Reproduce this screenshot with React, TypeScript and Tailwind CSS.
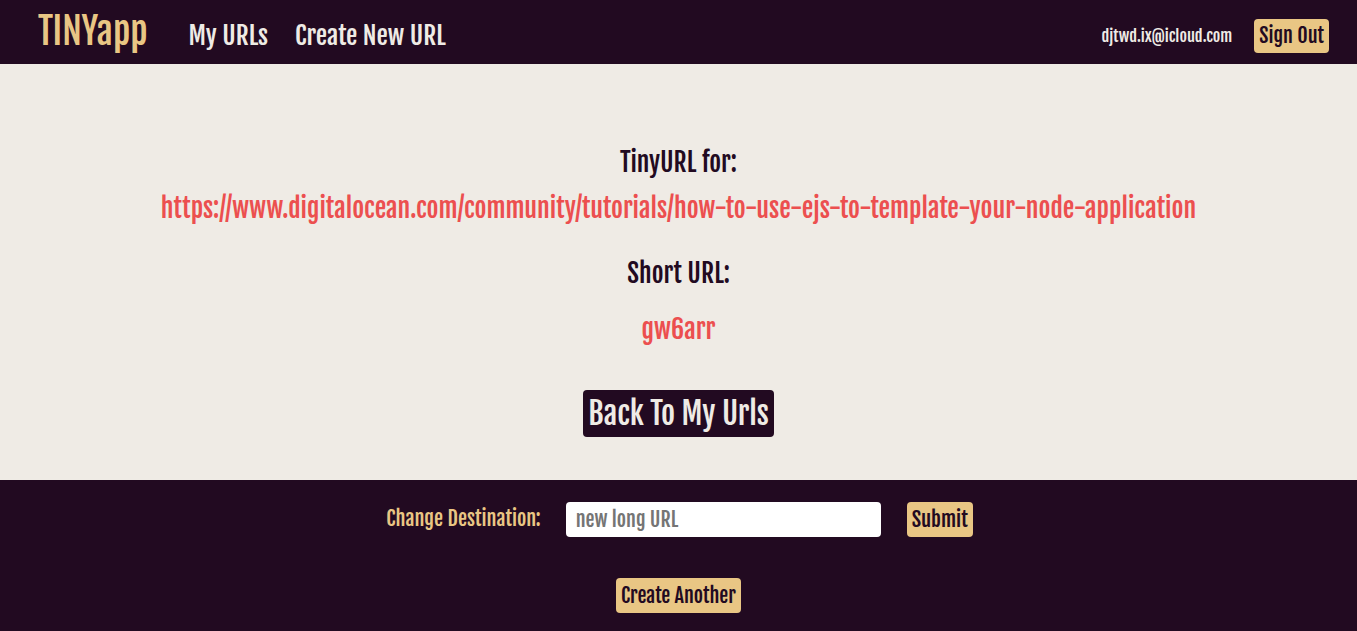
import React from "react";

const F = { fontFamily: '"Fjalla One","DejaVu Sans Condensed","Liberation Sans Narrow",sans-serif' };

export default function App() {
  return (
    <div style={F} className="w-[1357px] h-[631px] flex flex-col bg-[#efebe5] font-normal">
      <header className="h-[64px] bg-[#220a21] flex items-center pl-[38px] pr-[28px]">
        <div className="flex items-baseline">
          <div className="text-[36px] leading-[44px] text-[#e9c684]">TINYapp</div>
          <nav className="flex items-baseline gap-[27px] ml-[41px] text-[25.3px] text-[#efebe5]">
            <span>My URLs</span>
            <span>Create New URL</span>
          </nav>
        </div>
        <div className="ml-auto mt-[8px] flex items-center gap-[22px]">
          <span className="text-[16.2px] text-[#efebe5]">djtwd.ix@icloud.com</span>
          <button className="h-[34px] px-[5px] rounded-[4px] bg-[#e9c684] text-[#220a21] text-[20px]">Sign Out</button>
        </div>
      </header>
      <main className="h-[416px] flex flex-col items-center pt-[82px]">
        <div className="text-[25.6px] text-[#220a21] leading-[32px]">TinyURL for:</div>
        <div className="mt-[14px] text-[25.8px] text-[#ec4f4f] leading-[32px]">https://www.digitalocean.com/community/tutorials/how-to-use-ejs-to-template-your-node-application</div>
        <div className="mt-[33px] text-[25.6px] text-[#220a21] leading-[32px]">Short URL:</div>
        <div className="mt-[24px] text-[26px] text-[#ec4f4f] leading-[32px]">gw6arr</div>
        <button className="mt-[45px] h-[47px] px-[5px] rounded-[4px] bg-[#220a21] text-[#efebe5] text-[30.4px]">Back To My Urls</button>
      </main>
      <footer className="flex-1 bg-[#220a21] flex flex-col items-center">
        <div className="mt-[22px] ml-[2px] flex items-center h-[35px]">
          <span className="text-[20.2px] text-[#e9c684]">Change Destination:</span>
          <input
            placeholder="new long URL"
            className="ml-[25px] w-[315px] h-[35px] rounded-[4px] bg-white px-[10px] text-[20px] text-[#222] placeholder:text-[#757575] outline-none"
            style={F}
          />
          <button className="ml-[26px] h-[35px] px-[5px] rounded-[4px] bg-[#e9c684] text-[#220a21] text-[20.5px]">Submit</button>
        </div>
        <button className="mt-[41px] h-[35px] px-[5px] rounded-[4px] bg-[#e9c684] text-[#220a21] text-[20px]">Create Another</button>
      </footer>
    </div>
  );
}
